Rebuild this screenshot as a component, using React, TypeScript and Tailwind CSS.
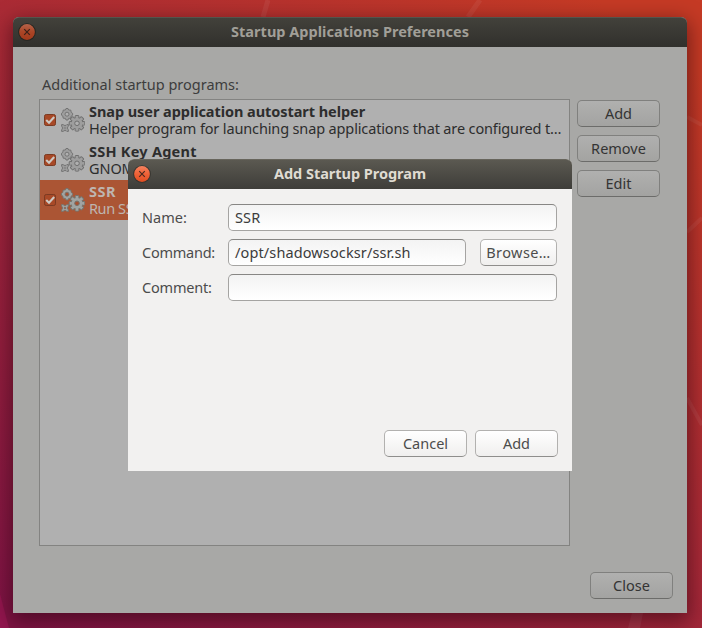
import type { ReactNode } from "react";

function CloseBadge({ dim = false }: { dim?: boolean }) {
  return (
    <svg width="18" height="18" viewBox="0 0 18 18" className="mb-px block">
      <defs>
        <linearGradient id={dim ? "orbDim" : "orb"} x1="0" y1="0" x2="0" y2="1">
          <stop offset="0" stopColor={dim ? "#b4634a" : "#f4825f"} />
          <stop offset="0.5" stopColor={dim ? "#ab4526" : "#ef6237"} />
          <stop offset="1" stopColor={dim ? "#a2391b" : "#e04e22"} />
        </linearGradient>
      </defs>
      <circle cx="9" cy="9" r="8.8" fill={dim ? "#25241f" : "#35332e"} />
      <circle cx="9" cy="9" r="7.9" fill={dim ? "url(#orbDim)" : "url(#orb)"} />
      <path d="M6.2 6.2 L11.8 11.8 M11.8 6.2 L6.2 11.8" stroke={dim ? "#3b2119" : "#4b2b20"} strokeWidth="1.2" fill="none" />
    </svg>
  );
}

function Tick() {
  return (
    <svg width="14" height="14" viewBox="0 0 14 14" className="block shrink-0">
      <rect x="1.5" y="1.5" width="11" height="11" rx="1.8" fill="#a84927" stroke="#7b3a22" />
      <path d="M3.2 7 L6 9.8 L11.2 4" fill="none" stroke="#cdc9c4" strokeWidth="2.1" />
    </svg>
  );
}

const TEETH = [0, 45, 90, 135, 180, 225, 270, 315];

function Gears({ selected = false }: { selected?: boolean }) {
  const rim = selected ? "#74746e" : "#6f6f6f";
  const body = selected ? "#a1a4a2" : "#9e9e9e";
  const hole = selected ? "#a75030" : "#b0b0b0";
  return (
    <svg width="24" height="24" viewBox="0 0 24 24" className="block shrink-0">
      <path d="M5 .5 H7 L7.6 2 L9.8 2.1 L10.2 4.4 L11.6 5.3 V7.2 L10.2 8 L9.8 10.2 L7.6 10.4 L7 12 H5 L4.4 10.4 L2.2 10.2 L1.8 8 L.5 7.2 V5.3 L1.8 4.4 L2.2 2.1 L4.4 2Z" fill={body} stroke={rim} strokeWidth="0.9" />
      <circle cx="6" cy="6.2" r="2" fill={hole} stroke={rim} strokeWidth="0.9" />
      {TEETH.map((a) => (
        <rect key={a} x="14.2" y="7.5" width="3.6" height="4" rx="0.5" fill={body} stroke={rim} strokeWidth="1" transform={`rotate(${a} 16 15.3)`} />
      ))}
      <circle cx="16" cy="15.3" r="5.8" fill={body} stroke={rim} strokeWidth="0.8" />
      {TEETH.map((a) => (
        <rect key={a} x="14.8" y="8.3" width="2.4" height="3" fill={body} transform={`rotate(${a} 16 15.3)`} />
      ))}
      <circle cx="16" cy="15.3" r="2.3" fill={hole} stroke={rim} strokeWidth="1" />
      <path d="M.6 16.6 H2.2 L3 17.4 H5 L5.8 16.6 H7.4 V18.2 L6.6 19 V21 L7.4 21.8 V23.4 H5.8 L5 22.6 H3 L2.2 23.4 H.6 V21.8 L1.4 21 V19 L.6 18.2Z" fill={body} stroke={rim} strokeWidth="0.9" />
      <circle cx="4" cy="20" r="0.9" fill={hole} stroke={rim} strokeWidth="0.6" />
    </svg>
  );
}

function DimButton({ children }: { children: ReactNode }) {
  return (
    <button className="h-[27px] w-[83px] rounded-[5px] border border-[#80807e] border-b-[#6c6c6a] bg-linear-to-b from-[#b0b0af] to-[#a3a3a1] text-center leading-[25px] text-[#343434]">
      {children}
    </button>
  );
}

function LightButton({ children, width, track = "tracking-[0px]" }: { children: ReactNode; width: string; track?: string }) {
  return (
    <button className={`h-[27px] rounded-[5px] border border-[#b2b1af] border-b-[#8f8e8c] bg-linear-to-b from-white to-[#f0efee] text-center leading-[25px] text-[#4c4c4c] ${width}`}>
      <span className={track}>{children}</span>
    </button>
  );
}

function Entry({ value, width }: { value: string; width: string }) {
  return (
    <div className={`h-[27px] rounded-[5px] border border-[#a5a4a2] border-t-[#878684] bg-linear-to-b from-[#f3f3f3] to-white pl-[6px] leading-[25px] text-[#3c3c3c] ${width}`}>
      <span className="tracking-[0.12px]">{value}</span>
    </div>
  );
}

function ProgramRow({ title, detail, selected = false, titleTrack, detailTrack }: { title: string; detail: string; selected?: boolean; titleTrack: string; detailTrack: string }) {
  return (
    <div className={`flex h-10 items-center pl-[3px] ${selected ? "bg-[#ab5534] text-[#beb5b0]" : "text-[#2d2d2d]"}`}>
      <Tick />
      <div className="ml-1">
        <Gears selected={selected} />
      </div>
      <div className="ml-1 whitespace-nowrap leading-[17px]">
        <div className={`font-bold ${titleTrack}`}>{title}</div>
        <div className={detailTrack}>{detail}</div>
      </div>
    </div>
  );
}

function Wallpaper() {
  return (
    <svg width="702" height="628" viewBox="0 0 702 628" className="absolute inset-0">
      <defs>
        <linearGradient id="wall" x1="0.05" y1="1" x2="0.85" y2="0">
          <stop offset="0" stopColor="#7f1444" />
          <stop offset="0.5" stopColor="#a52838" />
          <stop offset="1" stopColor="#c53a25" />
        </linearGradient>
      </defs>
      <rect width="702" height="628" fill="url(#wall)" />
      <path d="M0 594 L9 628 H0Z" fill="#93164f" />
      <path d="M268 0 L263 17 M480 0 L468 17" stroke="#ffffff" strokeOpacity="0.06" strokeWidth="5" />
      <path d="M687 117 L702 125 M687 232 L702 218 M687 398 L702 425" stroke="#ffffff" strokeOpacity="0.06" strokeWidth="4" />
      <path d="M632 613 L628 628 H640 L643 613Z" fill="#ffffff" fillOpacity="0.07" />
    </svg>
  );
}

export default function App() {
  return (
    <div className="relative h-[628px] w-[702px] overflow-hidden pl-[13px] pt-[17px] font-['Noto_Sans','Open_Sans',sans-serif] text-[14.5px]">
      <Wallpaper />
      <section className="relative flex h-[596px] w-[674px] flex-col rounded-t-[6px] bg-[#a8a8a6] shadow-[0_6px_20px_2px_rgba(30,0,10,0.5)]">
        <header className="flex h-[30px] items-center rounded-t-[6px] border-t border-[#55544c] bg-linear-to-b from-[#42413b] to-[#31302c] pl-[5px]">
          <CloseBadge dim />
          <h1 className="flex-1 pb-[2px] pr-[23px] text-center font-bold text-[#a19f98]">
            <span className="tracking-[0.02px]">Startup Applications Preferences</span>
          </h1>
        </header>
        <div className="pl-[29px] pt-[27px] leading-5 text-[#3d3d3d]">
          Additional startup programs:
        </div>
        <div className="mt-[5px] flex gap-[7px] pl-[26px]">
          <div className="h-[447px] w-[531px] border border-[#838381] bg-[#b0b0b0]">
            <ProgramRow title="Snap user application autostart helper" detail="Helper program for launching snap applications that are configured t…" titleTrack="tracking-[-0.06px]" detailTrack="tracking-[-0.14px]" />
            <ProgramRow title="SSH Key Agent" detail="GNOME" titleTrack="tracking-[0.25px]" detailTrack="tracking-[-0.1px]" />
            <ProgramRow title="SSR" detail="Run SSR" selected titleTrack="tracking-[0.5px]" detailTrack="tracking-[-0.4px]" />
          </div>
          <div className="flex flex-col gap-2 pt-px">
            <DimButton>Add</DimButton>
            <DimButton>Remove</DimButton>
            <DimButton>Edit</DimButton>
          </div>
        </div>
        <div className="mt-[26px] flex justify-end pr-[14px]">
          <DimButton>Close</DimButton>
        </div>
      </section>

      <section className="absolute left-[128px] top-[159px] flex h-[312px] w-[444px] flex-col rounded-t-[6px] bg-[#f2f1f0]">
        <header className="flex h-[30px] items-center rounded-t-[6px] border-t border-[#67655c] bg-linear-to-b from-[#5b5951] to-[#3e3d39] pl-[5px]">
          <CloseBadge />
          <h2 className="flex-1 pb-[2px] pr-[23px] text-center font-bold text-[#dfdbd2]">
            <span className="tracking-[-0.03px]">Add Startup Program</span>
          </h2>
        </header>
        <div className="grid grid-cols-[86px_329px] gap-y-2 pl-[14px] pt-[15px] leading-[27px] text-[#4c4c4c]">
          <label>Name:</label>
          <Entry value="SSR" width="w-[329px]" />
          <label className="tracking-[-0.25px]">Command:</label>
          <div className="flex justify-between">
            <Entry value="/opt/shadowsocksr/ssr.sh" width="w-[238px]" />
            <LightButton width="w-[77px]" track="tracking-[0.4px]">Browse…</LightButton>
          </div>
          <label className="tracking-[-0.2px]">Comment:</label>
          <Entry value="" width="w-[329px]" />
        </div>
        <footer className="mt-auto flex justify-end gap-2 pb-[14px] pr-[14px]">
          <LightButton width="w-[83px]">Cancel</LightButton>
          <LightButton width="w-[83px]">Add</LightButton>
        </footer>
      </section>
    </div>
  );
}
